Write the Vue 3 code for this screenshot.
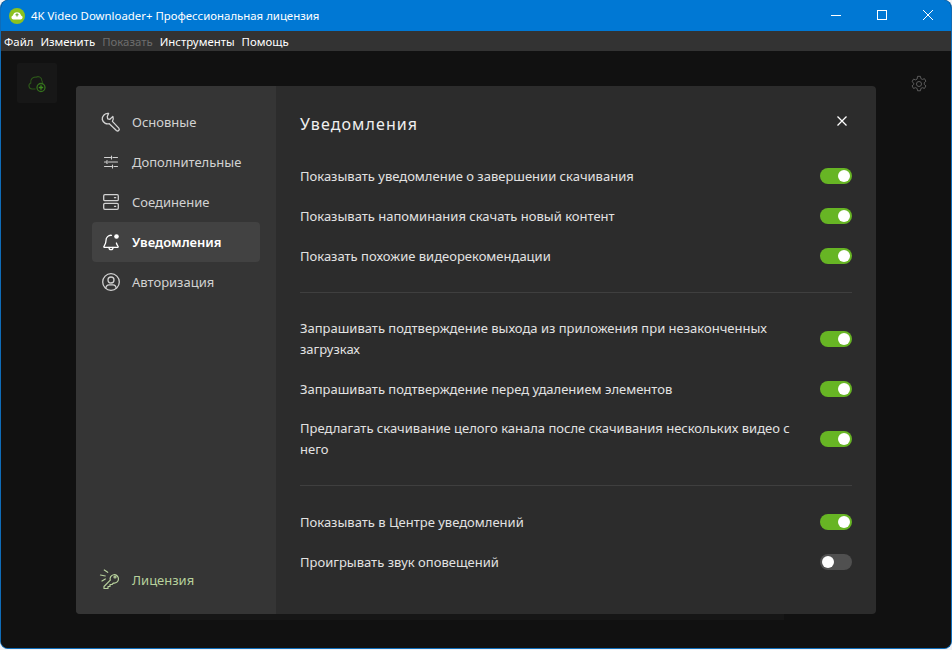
<template>
  <div class="window">
    <!-- заголовок окна -->
    <header class="titlebar">
      <svg class="app-logo" viewBox="0 0 20 20" width="16" height="16">
        <circle cx="10" cy="10" r="10" fill="#8cc21f" />
        <path d="M5.500 14.500h9a2.600 2.600 0 0 0 .6-5.100 5.200 5.200 0 0 0-10.200 0 2.600 2.600 0 0 0 .6 5.100z" fill="#fff" />
        <path d="M10 6.500v4M8 8.500h4" stroke="#6aa52a" stroke-width="1.400" />
      </svg>
      <span class="app-title">4K Video Downloader+ Профессиональная лицензия</span>
      <div class="win-controls">
        <svg viewBox="0 0 46 31" width="46" height="31"><path d="M18 15.500h10" stroke="#fff" /></svg>
        <svg viewBox="0 0 46 31" width="46" height="31"><rect x="18.500" y="10.500" width="9" height="9" fill="none" stroke="#fff" /></svg>
        <svg viewBox="0 0 46 31" width="46" height="31"><path d="M18 10l10 10M28 10L18 20" stroke="#fff" /></svg>
      </div>
    </header>

    <nav class="menubar">
      <span v-for="m in menu" :key="m.label" class="menu-item" :class="{ disabled: m.disabled }">{{ m.label }}</span>
    </nav>

    <div class="content">
      <div class="add-btn">
        <svg viewBox="0 0 20 20" width="20" height="20" fill="none" stroke="#2c5619" stroke-width="1.100">
          <path d="M8.500 16H5a3.200 3.200 0 0 1-1.200-6.100A4.600 4.600 0 0 1 9 4.200a3.800 3.800 0 0 1 5.800 3.300 3 3 0 0 1 .5 2.500" />
          <circle cx="14" cy="14.500" r="4" stroke="#34701c" stroke-width="1.300" />
          <path d="M14 12.300v4.400M11.800 14.500h4.400" stroke="#3c8a1e" stroke-width="1.300" />
        </svg>
      </div>
      <svg class="gear" viewBox="0 0 20 20" width="18" height="18" fill="none" stroke="#5c5c5c" stroke-width="1.100">
        <circle cx="10" cy="10" r="2.800" />
        <path d="M8.400 1.500h3.200l.5 2.500 1.600.9 2.400-.8 1.600 2.800-1.900 1.700v1.800l1.900 1.700-1.600 2.800-2.400-.8-1.600.9-.5 2.500H8.400l-.5-2.500-1.600-.9-2.400.8-1.600-2.800 1.900-1.700V9.100L2.300 7.400l1.600-2.800 2.400.8 1.600-.9z" stroke-linejoin="round" />
      </svg>
      <div class="backdrop-panel"></div>

      <div class="dialog">
        <aside class="sidebar">
          <div class="side-list">
            <div v-for="item in sideItems" :key="item.label" class="side-item" :class="{ active: item.active }">
              <svg class="side-icon" viewBox="0 0 20 20" width="20" height="20" fill="none" stroke="currentColor" stroke-width="1.300" stroke-linecap="round" stroke-linejoin="round">
                <path v-if="item.icon === 'wrench'" d="M7.600 1.400A5.600 5.600 0 0 0 1.300 7.500a5.600 5.600 0 0 0 7 4.200l7.100 6.800a1.700 1.700 0 0 0 2.400-2.400l-6.400-6.700a5.600 5.600 0 0 0 .5-5l-3 2.900-2.200-.5-.4-2.200z" />
                <path v-else-if="item.icon === 'sliders'" d="M3.500 5.500h6M12 5.500h4.500M3.500 10h1.500M7.500 10h9M3.500 14.500h7M13 14.500h3.500M10.500 4v3M6 8.500v3M11.500 13v3" stroke-width="1.100" />
                <template v-else-if="item.icon === 'server'">
                  <rect x="2.700" y="2.700" width="14.600" height="6" rx="1.200" />
                  <rect x="2.700" y="11.300" width="14.600" height="6" rx="1.200" />
                  <path d="M13.500 5.700h1.200M13.500 14.300h1.200" />
                </template>
                <template v-else-if="item.icon === 'bell'">
                  <path d="M10.500 3.300A5 5 0 0 0 5 8.500c0 4-2.200 5.500-2.200 6.300 0 .4.300.6.700.6h13c.4 0 .7-.2.700-.6 0-.6-1.200-1.700-1.800-3.800" />
                  <path d="M8 15.500c0 1.300.9 2.200 2 2.200s2-.9 2-2.200" />
                  <circle cx="15.500" cy="4.500" r="2.300" fill="currentColor" stroke="none" />
                </template>
                <template v-else>
                  <circle cx="10" cy="10" r="8.300" />
                  <circle cx="10" cy="8" r="3" />
                  <path d="M4.800 16.200c.3-2.300 2-3.400 3.200-3.400h4c1.300 0 2.900 1.100 3.200 3.400" />
                </template>
              </svg>
              <span>{{ item.label }}</span>
            </div>
          </div>

          <div class="side-item license">
            <svg class="side-icon" viewBox="0 0 20 20" width="20" height="20" fill="none" stroke="currentColor" stroke-width="1.200" stroke-linecap="round" stroke-linejoin="round">
              <path d="M3 18.500v-2l6.300-6.300a4.200 4.200 0 1 1 3.200 2.800l-1.500 1.500H9v2H7v2z" />
              <circle cx="14" cy="7" r="1" />
              <path d="M3.300 0l3.400 2.300M-.5 5l4.800 1M1 11l3.300-2" />
            </svg>
            <span>Лицензия</span>
          </div>
        </aside>

        <main class="panel">
          <div class="panel-head">
            <h1>Уведомления</h1>
            <svg class="close" viewBox="0 0 12 12" width="12" height="12"><path d="M1.500 1.500l9 9M10.500 1.500l-9 9" stroke="#fff" stroke-width="1.300" /></svg>
          </div>

          <section v-for="(group, i) in groups" :key="i" class="group">
            <div v-for="row in group" :key="row.text" class="row">
              <span class="row-text">{{ row.text }}</span>
              <span class="toggle" :class="{ on: row.on }"><i></i></span>
            </div>
          </section>
        </main>
      </div>
    </div>
  </div>
</template>

<script setup>
const menu = [
  { label: 'Файл' },
  { label: 'Изменить' },
  { label: 'Показать', disabled: true },
  { label: 'Инструменты' },
  { label: 'Помощь' },
];

const sideItems = [
  { label: 'Основные', icon: 'wrench' },
  { label: 'Дополнительные', icon: 'sliders' },
  { label: 'Соединение', icon: 'server' },
  { label: 'Уведомления', icon: 'bell', active: true },
  { label: 'Авторизация', icon: 'user' },
];

const groups = [
  [
    { text: 'Показывать уведомление о завершении скачивания', on: true },
    { text: 'Показывать напоминания скачать новый контент', on: true },
    { text: 'Показать похожие видеорекомендации', on: true },
  ],
  [
    { text: 'Запрашивать подтверждение выхода из приложения при незаконченных загрузках', on: true },
    { text: 'Запрашивать подтверждение перед удалением элементов', on: true },
    { text: 'Предлагать скачивание целого канала после скачивания нескольких видео с него', on: true },
  ],
  [
    { text: 'Показывать в Центре уведомлений', on: true },
    { text: 'Проигрывать звук оповещений', on: false },
  ],
];
</script>

<style>
html,
body {
  margin: 0;
  background: #f1f3f6;
}
</style>

<style scoped>
.window {
  width: 952px;
  height: 649px;
  box-sizing: border-box;
  border: solid #0f6cb8;
  border-width: 0 1px 1px 1px;
  border-radius: 8px;
  overflow: hidden;
  display: flex;
  flex-direction: column;
  background: #111;
  font-family: "Noto Sans", "Open Sans", sans-serif;
}

.titlebar {
  height: 31px;
  flex: none;
  display: flex;
  align-items: center;
  padding-left: 8px;
  background: #0078d4;
  color: #fff;
  font-size: 11.4px;
}

.app-logo {
  flex: none;
}

.app-title {
  margin-left: 6px;
}

.win-controls {
  margin-left: auto;
  display: flex;
  height: 31px;
}

.menubar {
  height: 20px;
  flex: none;
  display: flex;
  align-items: center;
  gap: 7px;
  padding-left: 3px;
  background: #333;
  color: #fff;
  font-size: 11.4px;
}

.menu-item.disabled {
  color: #6d6d6d;
}

.content {
  flex: 1;
  position: relative;
  display: flex;
  justify-content: center;
  align-items: flex-start;
  padding-top: 35px;
  background: #111;
}

.add-btn {
  position: absolute;
  left: 16px;
  top: 12px;
  width: 40px;
  height: 40px;
  display: flex;
  align-items: center;
  justify-content: center;
  background: #171717;
  border-radius: 2px;
}

.gear {
  position: absolute;
  right: 23px;
  top: 24px;
}

.backdrop-panel {
  position: absolute;
  left: 169px;
  top: 60px;
  width: 614px;
  height: 509px;
  background: #161616;
}

.dialog {
  position: relative;
  width: 800px;
  height: 528px;
  display: flex;
  border-radius: 4px;
  overflow: hidden;
  background: #2c2c2c;
}

.sidebar {
  width: 200px;
  flex: none;
  box-sizing: border-box;
  padding: 16px;
  display: flex;
  flex-direction: column;
  justify-content: space-between;
  background: #353535;
}

.side-list {
  display: flex;
  flex-direction: column;
}

.side-item {
  height: 40px;
  display: flex;
  align-items: center;
  gap: 11px;
  padding-left: 9px;
  border-radius: 4px;
  color: #d2d2d2;
  font-size: 13px;
}

.side-icon {
  flex: none;
  overflow: visible;
}

.side-item.active {
  background: #424242;
  color: #fff;
  font-weight: 600;
}

.side-item.license {
  margin-bottom: -2px;
  color: #b7d19c;
}

.panel {
  flex: 1;
  padding: 0 24px;
  min-width: 0;
}

.panel-head {
  height: 70px;
  display: flex;
  align-items: center;
  justify-content: space-between;
  padding-right: 4px;
}

.panel-head h1 {
  margin: 5px 0 0;
  font-size: 16px;
  font-weight: 400;
  letter-spacing: 1.100px;
  color: #f0f0f0;
}

.group {
  padding: 16px 0;
  border-bottom: 1px solid #3f3f3f;
}

.group:first-of-type {
  padding-top: 0;
}

.group:last-of-type {
  border-bottom: 0;
}

.row {
  min-height: 40px;
  box-sizing: border-box;
  padding: 9px 0;
  display: flex;
  align-items: center;
  justify-content: space-between;
  gap: 24px;
}

.row-text {
  font-size: 13px;
  line-height: 21px;
  color: #e2e2e2;
}

.toggle {
  flex: none;
  width: 32px;
  height: 16px;
  box-sizing: border-box;
  padding: 2px;
  border-radius: 8px;
  display: flex;
  background: #505050;
}

.toggle.on {
  justify-content: flex-end;
  background: #67b524;
}

.toggle i {
  width: 12px;
  height: 12px;
  border-radius: 50%;
  background: #fff;
}
</style>
